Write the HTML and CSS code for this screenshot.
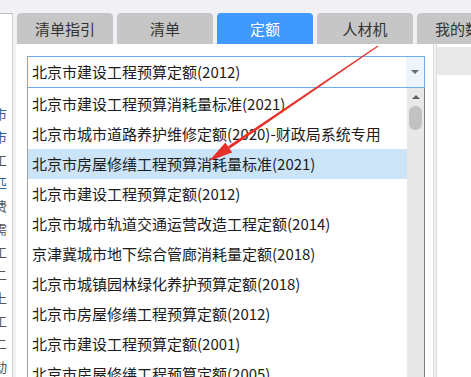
FILE: index.html
```html
<!DOCTYPE html>
<html lang="zh-CN">
<head>
    <meta charset="UTF-8">
    <title>定额库选择</title>
    <link rel="stylesheet" href="styles.css">
</head>
<body>
    <div class="app">
        <aside class="side">
            <div class="frag blue">市</div>
            <div class="frag blue">市</div>
            <div class="frag">工</div>
            <div class="frag blue">匹</div>
            <div class="frag">费</div>
            <div class="frag">需</div>
            <div class="frag">工</div>
            <div class="frag">二</div>
            <div class="frag">上</div>
            <div class="frag">工</div>
            <div class="frag">二</div>
            <div class="frag">动</div>
        </aside>

        <main class="main">
            <div class="tabs">
                <div class="tab">清单指引</div>
                <div class="tab">清单</div>
                <div class="tab active">定额</div>
                <div class="tab">人材机</div>
                <div class="tab">我的数据</div>
            </div>

            <div class="content">
                <div class="panel">
                    <div class="combo">
                        <span class="combo-text">北京市建设工程预算定额(2012)</span>
                        <span class="combo-btn"><i class="caret"></i></span>
                    </div>
                    <div class="list">
                        <ul class="items">
                            <li>北京市建设工程预算消耗量标准(2021)</li>
                            <li>北京市城市道路养护维修定额(2020)-财政局系统专用</li>
                            <li class="hover">北京市房屋修缮工程预算消耗量标准(2021)</li>
                            <li>北京市建设工程预算定额(2012)</li>
                            <li>北京市城市轨道交通运营改造工程定额(2014)</li>
                            <li>京津冀城市地下综合管廊消耗量定额(2018)</li>
                            <li>北京市城镇园林绿化养护预算定额(2018)</li>
                            <li>北京市房屋修缮工程预算定额(2012)</li>
                            <li>北京市建设工程预算定额(2001)</li>
                            <li>北京市房屋修缮工程预算定额(2005)</li>
                        </ul>
                        <div class="scrollbar">
                            <i class="up"></i>
                            <div class="thumb"></div>
                        </div>
                    </div>
                </div>
                <div class="right">
                    <div class="right-head"></div>
                </div>
            </div>
        </main>
    </div>

    <!-- 标注箭头 -->
    <svg class="arrow" width="471" height="377" viewBox="0 0 471 377">
        <polygon points="378.3,46.4 377.7,45.6 228.0,146.3 229.6,148.7" fill="#e8302a"/>
        <polygon points="209,161 232.2,152.5 225.4,142.5" fill="#e8302a"/>
    </svg>
</body>
</html>
```

FILE: styles.css
```css
body {
    margin: 0;
    background-color: #f1f1f5;
    font-family: "Noto Sans CJK SC", "Noto Sans", sans-serif;
    font-size: 15px;
    color: #1c1c1c;
    overflow: hidden;
}
.app {
    display: flex;
    height: 377px;
    overflow: hidden;
}
.side {
    width: 12px;
    margin-top: 13px;
    padding-top: 88px;
    background-color: #fff;
    border-right: 1px solid #cfcfcf;
    border-top: 1px solid #bdbdbd;
    overflow: hidden;
}
.frag {
    height: 23px;
    line-height: 23px;
    margin-left: -6px;
    font-size: 13px;
    color: #555;
}
.frag.blue {
    color: #2a5d9c;
}
.main {
    flex: 1;
    margin-left: 3px;
    display: flex;
    flex-direction: column;
    min-width: 0;
    overflow: hidden;
}
.tabs {
    flex-shrink: 0;
    display: flex;
    gap: 4px;
    padding: 13px 0 0 1px;
    height: 31px;
    overflow: hidden;
}
.tab {
    flex: 0 0 96px;
    height: 31px;
    line-height: 31px;
    text-align: center;
    background-color: #c6c6c6;
    color: #333;
    border-radius: 4px 4px 0 0;
    white-space: nowrap;
}
.tab.active {
    background-color: #3f99ff;
    color: #fff;
}
.content {
    flex: 1;
    display: flex;
    min-height: 0;
}
.panel {
    width: 418px;
    box-sizing: border-box;
    background-color: #fff;
    border-right: 1px solid #dcdcdc;
    padding: 12px 0 0 11px;
    overflow: hidden;
}
.combo {
    width: 398px;
    height: 32px;
    box-sizing: border-box;
    border: 1px solid #6aaeef;
    display: flex;
    align-items: center;
}
.combo-text {
    flex: 1;
    padding-left: 4px;
    line-height: 30px;
}
.combo-btn {
    width: 18px;
    height: 30px;
    background-color: #eef4fc;
    display: flex;
    align-items: center;
    justify-content: center;
}
.caret {
    border-left: 4px solid transparent;
    border-right: 4px solid transparent;
    border-top: 4px solid #6a6a6a;
}
.list {
    width: 398px;
    height: 300px;
    box-sizing: border-box;
    border-left: 1px solid #a0a0a0;
    border-right: 1px solid #7e7e7e;
    display: flex;
}
.items {
    flex: 1;
    list-style: none;
    margin: 0;
    padding: 1px 0 0;
}
.items li {
    height: 30px;
    line-height: 30px;
    padding-left: 4px;
    white-space: nowrap;
}
.items li.hover {
    background-color: #cce4f7;
}
.scrollbar {
    width: 17px;
    background-color: #e8e8e8;
    display: flex;
    flex-direction: column;
    align-items: center;
}
.up {
    margin-top: 7px;
    border-left: 4px solid transparent;
    border-right: 4px solid transparent;
    border-bottom: 4px solid #606060;
}
.thumb {
    margin-top: 7px;
    width: 13px;
    height: 24px;
    border-radius: 6px;
    background-color: #c2c2c2;
}
.right {
    flex: 1;
    margin-left: 2px;
    padding-top: 3px;
    background-color: #fff;
    border-left: 1px solid #dedede;
}
.right-head {
    height: 28px;
    background-color: #e9e9e9;
}
.arrow {
    position: absolute;
    left: 0;
    top: 0;
    pointer-events: none;
}
```
